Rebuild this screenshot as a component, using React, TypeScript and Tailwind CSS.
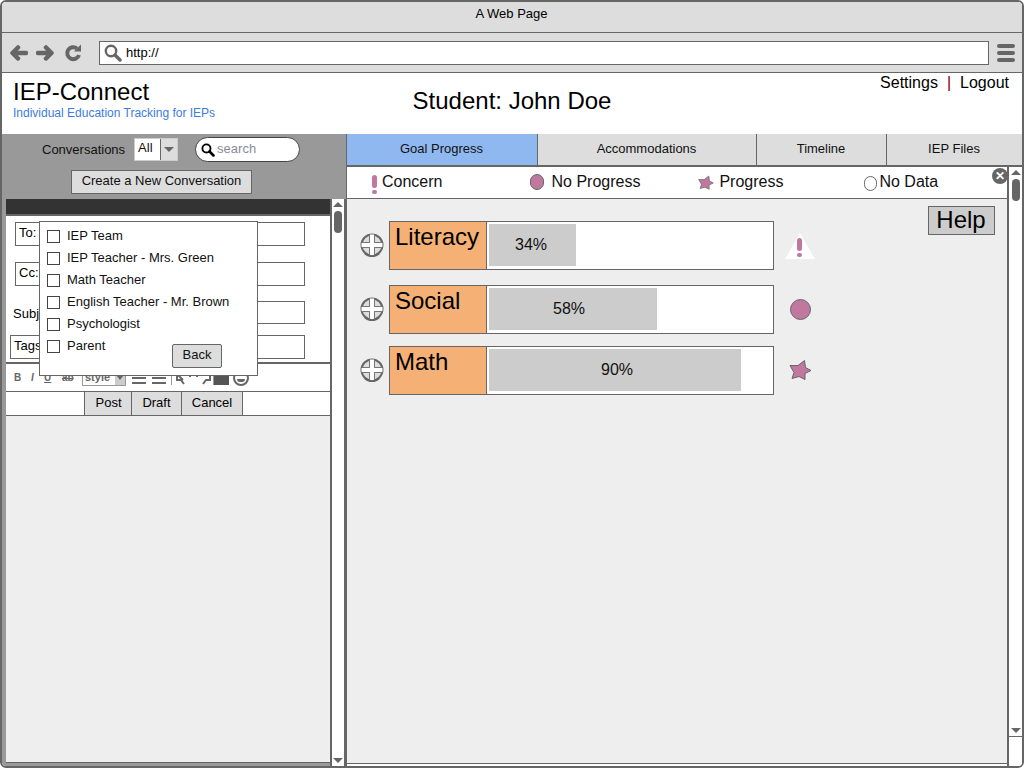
const recipients = ["IEP Team", "IEP Teacher - Mrs. Green", "Math Teacher", "English Teacher - Mr. Brown", "Psychologist", "Parent"];

function ArrowIcon({ flip }: { flip?: boolean }) {
    return (
        <svg width="18" height="16" viewBox="0 0 18 16" className={flip ? "rotate-180" : ""}>
            <path d="M8 2.5 L2.5 8 L8 13.5 M3 8 H16" fill="none" stroke="#666" strokeWidth="4.5" strokeLinejoin="round" strokeLinecap="round" />
        </svg>
    );
}

function SearchIcon({ size, color }: { size: number; color: string }) {
    return (
        <svg width={size} height={size} viewBox="0 0 18 18" className="flex-none">
            <circle cx="7" cy="7" r="5.2" fill="none" stroke={color} strokeWidth="2.4" />
            <path d="M11 11 L16 16" stroke={color} strokeWidth="3.4" strokeLinecap="round" />
        </svg>
    );
}

function ScrollColumn({ className, thumbClass }: { className: string; thumbClass: string }) {
    return (
        <div className={"flex flex-col items-center bg-white " + className}>
            <div className="mt-[3px] w-0 h-0 border-x-[5px] border-x-transparent border-b-[5px] border-b-[#666]"></div>
            <div className={"w-[8px] rounded-full bg-[#666] " + thumbClass}></div>
            <div className="mt-auto mb-[3px] w-0 h-0 border-x-[5px] border-x-transparent border-t-[5px] border-t-[#666]"></div>
        </div>
    );
}

function Field({ label, className }: { label: string; className: string }) {
    return (
        <div className={"border border-[#666] bg-white text-[13px] text-black leading-[15px] pt-[2px] pl-[3px] " + className}>{label}</div>
    );
}

function PlusCircle() {
    return (
        <svg width="24" height="24" viewBox="0 0 24 24" className="flex-none -mt-[1px]">
            <circle cx="12" cy="12" r="10.5" fill="#ddd" stroke="#666" strokeWidth="2" />
            <path d="M12 2 V22 M2 12 H22" stroke="#777" strokeWidth="6" />
            <path d="M12 1.5 V22.5 M1.5 12 H22.5" stroke="#fff" strokeWidth="4" />
            <path d="M5 20.5 A10.5 10.5 0 0 0 19 20.5" fill="none" stroke="#666" strokeWidth="2" />
        </svg>
    );
}

function Star({ size }: { size: number }) {
    return (
        <svg width={size} height={size} viewBox="0 0 23 22">
            <path d="M15.5 1 L16.5 8 L22 11 L16 14 L16 20 L10 17 L3 19 L5 13 L1 6 L9 6 Z" fill="#c0789f" stroke="#666" strokeWidth="1" />
        </svg>
    );
}

function Bang({ className }: { className: string }) {
    return (
        <div className={"flex flex-col items-center " + className}>
            <div className="w-[5px] h-[13px] rounded-sm bg-[#c0789f]"></div>
            <div className="w-[5px] h-[4px] mt-[2px] rounded-full bg-[#c0789f]"></div>
        </div>
    );
}

function ListIcon({ className }: { className: string }) {
    return (
        <div className={"w-[14px] flex-none flex flex-col gap-[3px] " + className}>
            <div className="h-[2px] bg-[#666]"></div>
            <div className="h-[2px] bg-[#666]"></div>
            <div className="h-[2px] bg-[#666]"></div>
        </div>
    );
}

function GoalRow({ label, pct, barClass, textClass, icon, className }: { label: string; pct: string; barClass: string; textClass: string; icon: React.ReactNode; className: string }) {
    return (
        <div className={"flex items-center " + className}>
            <div className="w-[42px] pl-[13px] flex-none"><PlusCircle /></div>
            <div className="flex w-[385px] h-[49px] border border-[#666] bg-white flex-none">
                <div className="w-[97px] h-full bg-[#f5b175] border-r border-[#666] text-[24px] leading-[28px] text-black pl-[5px] pt-[1px] flex-none">{label}</div>
                <div className="p-[2px] flex-1">
                    <div className={"h-[42px] bg-[#ccc] text-[16px] text-[#111] leading-[42px] " + barClass}>
                        <span className={"block " + textClass}>{pct}</span>
                    </div>
                </div>
            </div>
            <div className="flex-none w-[44px] flex justify-center pl-[8px]">{icon}</div>
        </div>
    );
}

export default function App() {
    return (
        <div className="relative w-[1024px] h-[768px] overflow-hidden border-2 border-[#666] rounded-[6px] bg-white flex flex-col font-['Liberation_Sans',Arial,sans-serif] text-black">
            {/* browser chrome */}
            <div className="h-[31px] flex-none bg-[#ddd] border-b border-[#666] text-center text-[13px] leading-[23px] pr-[1px]">A Web Page</div>
            <div className="h-[40px] flex-none bg-[#ddd] border-b border-[#666] flex items-center pl-[8px]">
                <ArrowIcon />
                <div className="w-[8px]"></div>
                <ArrowIcon flip />
                <svg width="18" height="18" viewBox="0 0 18 18" className="ml-[10px]">
                    <path d="M15 11 A6 6 0 1 1 13 4.5" fill="none" stroke="#666" strokeWidth="4" />
                    <path d="M10 7.5 H17 V0.5 Z" fill="#666" />
                </svg>
                <div className="ml-[17px] w-[890px] h-[24px] bg-white border border-[#666] flex items-center pl-[4px] text-[13px]">
                    <SearchIcon size={18} color="#666" />
                    <span className="ml-[4px]">http://</span>
                </div>
                <div className="ml-[8px] w-[18px] flex flex-col gap-[3px]">
                    <div className="h-[4px] rounded-full bg-[#666]"></div>
                    <div className="h-[4px] rounded-full bg-[#666]"></div>
                    <div className="h-[4px] rounded-full bg-[#666]"></div>
                </div>
            </div>

            {/* page header */}
            <div className="h-[61px] flex-none flex bg-white">
                <div className="w-[340px] pl-[11px] pt-[5px] flex-none">
                    <div className="text-[24px] leading-[28px]">IEP-Connect</div>
                    <div className="text-[12px] leading-[14px] text-[#3c7be6]">Individual Education Tracking for IEPs</div>
                </div>
                <div className="w-[340px] text-center text-[24px] leading-[28px] pt-[14px] flex-none">Student: John Doe</div>
                <div className="flex-1 flex justify-end pr-[13px] text-[16px] leading-[18px] pt-[1px]">
                    <span>Settings</span>
                    <span className="mx-[9px] text-[#800000]">|</span>
                    <span>Logout</span>
                </div>
            </div>

            <div className="flex-1 flex min-h-0">
                {/* conversations */}
                <div className="w-[344px] flex-none bg-[#999] flex flex-col relative">
                    <div className="h-[65px] flex-none flex flex-col">
                        <div className="flex items-center h-[31px] text-[13px] text-[#111] w-full pl-[40px]">
                            <span>Conversations</span>
                            <div className="ml-[9px] w-[44px] h-[23px] flex border border-[#ccc] bg-white">
                                <span className="w-[25px] pl-[3px] leading-[17px]">All</span>
                                <div className="flex-1 bg-[#ddd] border-l border-[#666] flex items-center justify-center">
                                    <div className="w-0 h-0 border-x-[5px] border-x-transparent border-t-[5px] border-t-[#666]"></div>
                                </div>
                            </div>
                            <div className="ml-[17px] w-[105px] h-[25px] flex items-center rounded-full border border-[#444] bg-white pl-[5px]">
                                <SearchIcon size={14} color="#000" />
                                <span className="ml-[2px] -mt-[1px] text-[#8a8a9a]">search</span>
                            </div>
                        </div>
                        <div className="w-[181px] h-[24px] mt-[5px] ml-[69px] bg-[#ddd] border border-[#666] text-[13px] text-center leading-[20px] text-[#111]">Create a New Conversation</div>
                    </div>

                    <div className="flex-1 flex min-h-0">
                        <div className="w-[4px] flex-none"></div>
                        <div className="w-[324px] flex-none flex flex-col">
                            <div className="h-[15px] flex-none bg-[#333]"></div>
                            <div className="h-[150px] flex-none bg-white border-y-2 border-[#666] relative">
                                <Field label="To:" className="absolute left-[9px] top-[6px] w-[290px] h-[24px]" />
                                <Field label="Cc:" className="absolute left-[9px] top-[46px] w-[290px] h-[24px]" />
                                <span className="absolute left-[7px] top-[90px] text-[13px] leading-[15px]">Subject:</span>
                                <div className="absolute left-[80px] top-[85px] w-[219px] h-[23px] border border-[#666]"></div>
                                <Field label="Tags:" className="absolute left-[4px] top-[119px] w-[295px] h-[24px]" />
                            </div>
                            {/* editor toolbar */}
                            <div className="h-[28px] flex-none bg-white flex items-center pl-[8px] border-b border-[#666] text-[#666] text-[10px] font-bold">
                                <span className="w-[7px]">B</span>
                                <span className="ml-[10px] w-[3px] italic">I</span>
                                <span className="ml-[10px] w-[7px] underline">U</span>
                                <span className="ml-[11px] w-[14px] line-through">ab</span>
                                <div className="ml-[6px] w-[44px] h-[16px] mt-[1px] flex border border-[#999] leading-[12px] text-[11px]">
                                    <span className="w-[32px] pl-[2px]">style</span>
                                    <div className="flex-1 bg-[#ccc] flex justify-center pt-[5px]">
                                        <div className="w-0 h-0 border-x-[3px] border-x-transparent border-t-[4px] border-t-[#666]"></div>
                                    </div>
                                </div>
                                <ListIcon className="ml-[6px]" />
                                <ListIcon className="ml-[6px]" />
                                <div className="ml-[5px] w-[1px] h-[14px] bg-[#999] flex-none"></div>
                                <svg width="36" height="14" viewBox="0 0 36 14" className="ml-[4px] flex-none">
                                    <path d="M1 3 V9 H5 L8 13 M1 3 L7 9" fill="none" stroke="#666" strokeWidth="2" />
                                    <path d="M34 2 V9 H30 L27 13" fill="none" stroke="#666" strokeWidth="2" />
                                    <path d="M14 3 V6 M21 3 V6" stroke="#666" strokeWidth="2" />
                                </svg>
                                <div className="ml-[1px] w-[1px] h-[14px] bg-[#999] flex-none"></div>
                                <svg width="15" height="14" viewBox="0 0 15 14" className="flex-none">
                                    <path d="M0 0 H15 V14 H0 Z" fill="#555" />
                                </svg>
                                <div className="ml-[4px] w-[16px] h-[16px] rounded-full border-2 border-[#666] flex-none flex items-end justify-center pb-[2px]">
                                    <div className="w-[8px] h-[3px] rounded-b-full bg-[#666]"></div>
                                </div>
                            </div>
                            <div className="h-[24px] flex-none bg-white border-b border-[#666] flex pl-[78px]">
                                <div className="flex h-[24px]">
                                    <div className="w-[48px] bg-[#ddd] border border-[#666] border-t-0 text-[13px] text-center leading-[21px] pl-[1px]">Post</div>
                                    <div className="w-[50px] bg-[#ddd] border border-[#666] border-t-0 border-l-0 text-[13px] text-center leading-[21px]">Draft</div>
                                    <div className="w-[61px] bg-[#ddd] border border-[#666] border-t-0 border-l-0 text-[13px] text-center leading-[21px]">Cancel</div>
                                </div>
                            </div>
                            <div className="flex-1 bg-[#eee] border-b border-[#666]"></div>
                            <div className="h-[3px] flex-none"></div>
                        </div>
                        <ScrollColumn className="w-[16px] flex-none border-x-2 border-[#666]" thumbClass="h-[22px] mt-[4px]" />
                    </div>

                    {/* recipient picker */}
                    <div className="absolute left-[37px] top-[87px] w-[219px] h-[155px] bg-white border border-[#666] pl-[7px] pt-[3px] text-[13px] text-[#111]">
                        {recipients.map((name) => (
                            <div key={name} className="flex items-center h-[22px]">
                                <div className="w-[13px] h-[13px] border border-[#444] flex-none"></div>
                                <span className="ml-[7px]">{name}</span>
                            </div>
                        ))}
                        <div className="absolute left-[132px] top-[122px] w-[50px] h-[24px] bg-[#ddd] border border-[#666] rounded-[2px] text-center leading-[20px]">Back</div>
                    </div>
                </div>

                {/* goals */}
                <div className="flex-1 flex flex-col min-w-0 border-l border-[#666] relative">
                    <div className="h-[33px] flex-none flex border-b-2 border-[#666] text-[13px] text-[#111] leading-[30px] text-center">
                        <div className="w-[191px] pr-[1px] bg-[#8fb8f0] border-r border-[#666] flex-none">Goal Progress</div>
                        <div className="w-[219px] pr-[1px] bg-[#ddd] border-r border-[#666] flex-none">Accommodations</div>
                        <div className="w-[130px] pr-[1px] bg-[#ddd] border-r border-[#666] flex-none">Timeline</div>
                        <div className="flex-1 pr-[1px] bg-[#ddd]">IEP Files</div>
                    </div>
                    <div className="flex-1 flex min-h-0">
                        <div className="w-[660px] flex-none flex flex-col">
                            <div className="h-[32px] flex-none bg-white border-b border-[#666] flex items-center text-[16px] text-[#111] pb-[1px]">
                                <Bang className="ml-[25px] mt-[5px]" />
                                <span className="ml-[5px]">Concern</span>
                                <div className="ml-[88px] w-[14px] h-[16px] rounded-full bg-[#c0789f] border border-[#666]"></div>
                                <span className="ml-[7px]">No Progress</span>
                                <div className="ml-[58px] mt-[1px]"><Star size={16} /></div>
                                <span className="ml-[5px]">Progress</span>
                                <div className="ml-[81px] mt-[2px] w-[13px] h-[15px] rounded-full border border-[#666]"></div>
                                <span className="ml-[2px]">No Data</span>
                            </div>
                            <div className="flex-1 bg-[#eee] border-b border-[#666] relative">
                                <div className="absolute right-[12px] top-[7px] w-[67px] h-[29px] bg-[#ccc] border border-[#666] text-[24px] leading-[26px] text-center pr-[1px]">Help</div>
                                <GoalRow
                                    label="Literacy"
                                    pct="34%"
                                    barClass="w-[87px]"
                                    textClass="pl-[26px]"
                                    className="mt-[22px]"
                                    icon={
                                        <div className="relative w-[30px] h-[26px]">
                                            <svg width="30" height="26" viewBox="0 0 30 26">
                                                <path d="M15 0 L30 26 H0 Z" fill="#fff" />
                                            </svg>
                                            <Bang className="absolute left-[12px] top-[5px]" />
                                        </div>
                                    }
                                />
                                <GoalRow
                                    label="Social"
                                    pct="58%"
                                    barClass="w-[168px]"
                                    textClass="pl-[64px]"
                                    className="mt-[15px]"
                                    icon={<div className="w-[21px] h-[21px] rounded-full bg-[#c0789f] border border-[#666]"></div>}
                                />
                                <GoalRow
                                    label="Math"
                                    pct="90%"
                                    barClass="w-[252px]"
                                    textClass="pl-[112px]"
                                    className="mt-[12px]"
                                    icon={<Star size={23} />}
                                />
                            </div>
                            <div className="h-[2px] flex-none bg-white"></div>
                        </div>
                        <div className="flex-1 flex flex-col border-l-2 border-[#666]">
                            <ScrollColumn className="h-[570px] flex-none border-b border-[#666]" thumbClass="h-[22px] mt-[4px]" />
                            <div className="flex-1 bg-white"></div>
                        </div>
                    </div>
                    {/* close */}
                    <div className="absolute left-[645px] top-[34px] w-[16px] h-[16px] rounded-full bg-[#666] flex items-center justify-center text-white text-[12px] font-bold leading-none">✕</div>
                </div>
            </div>
        </div>
    );
}
